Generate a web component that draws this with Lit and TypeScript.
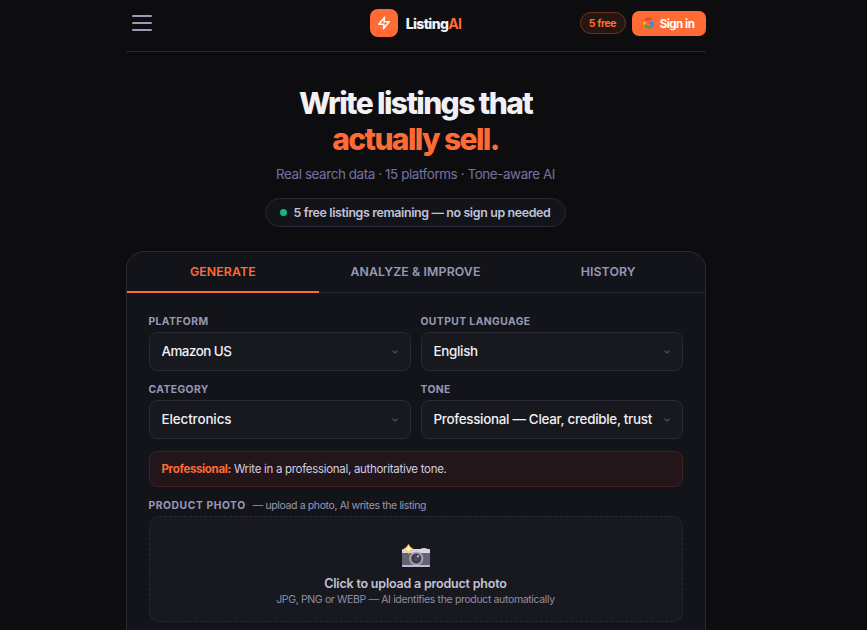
import { LitElement, html, css } from "lit";
import { customElement, property } from "lit/decorators.js";
import { classMap } from "lit/directives/class-map.js";

@customElement("select-field")
class SelectField extends LitElement {
  @property() label = "";
  @property() value = "";
  @property({ type: Number }) tracking = 0;

  static styles = css`
    :host { display: block; min-width: 0; }
    .label {
      height: 22px; line-height: 23px; margin: 0;
      font-size: 10.3px; font-weight: 700; letter-spacing: 0.43px;
      color: #9998b5; text-transform: uppercase;
    }
    .box {
      box-sizing: border-box; height: 39px; display: flex; align-items: center;
      gap: 10px; padding: 0 11px 1px 12px; border: 1px solid #282934; border-radius: 8px;
      background: #18191e; color: #f0f0f5; font-size: 13.4px; font-weight: 500;
    }
    .value { flex: 1; min-width: 0; white-space: nowrap; overflow: hidden; line-height: 20px; }
    svg { flex: none; margin-top: 2px; }
  `;

  render() {
    return html`
      <div class="label">${this.label}</div>
      <div class="box">
        <span class="value" style="letter-spacing:${this.tracking}px">${this.value}</span>
        <svg width="8" height="6" viewBox="0 0 8 6" fill="none" stroke="#4c4b63" stroke-width="1.2" stroke-linecap="round" stroke-linejoin="round"><path d="M1.800 1.800l2.200 2.200 2.200-2.200" /></svg>
      </div>
    `;
  }
}

@customElement("app-root")
class AppRoot extends LitElement {
  static styles = css`
    :host {
      display: block; height: 630px; overflow: hidden; background: #0d0d0f;
      font-family: "Inter", "Liberation Sans", sans-serif; color: #f0f0f5;
    }
    .page { width: 580px; margin-left: 125.5px; }
    header {
      box-sizing: border-box; height: 52px; padding-bottom: 5px;
      display: grid; grid-template-columns: 1fr auto 1fr; align-items: center;
      border-bottom: 1px solid #28282b;
    }
    .burger { display: flex; flex-direction: column; gap: 5px; width: 20px; margin-left: 6px; }
    .burger i { height: 2px; background: #9d9ab8; border-radius: 1px; }
    .brand { display: flex; align-items: center; gap: 8px; }
    .logo {
      width: 28px; height: 28px; border-radius: 8px; background: #ff6b35;
      display: flex; align-items: center; justify-content: center;
    }
    .name { font-size: 14px; font-weight: 800; letter-spacing: -0.65px; line-height: 20px; margin-top: 1px; }
    .name b, .accent { color: #ff6b35; font-weight: 800; }
    .name b { font-weight: 700; }
    .actions { display: flex; align-items: center; justify-content: flex-end; gap: 6px; }
    .badge {
      box-sizing: border-box; width: 46px; height: 22px; border-radius: 11px;
      border: 1px solid #66331f; background: #25160f; color: #ff6b35;
      font-size: 10.5px; font-weight: 700; letter-spacing: -0.42px; line-height: 21px; text-align: center;
    }
    .signin {
      box-sizing: border-box; width: 74px; height: 25px; border-radius: 7px; background: #ff6b35; color: #fff;
      display: flex; align-items: center; justify-content: center; gap: 5px;
      font-size: 11.5px; font-weight: 700; letter-spacing: -0.49px; white-space: nowrap;
    }
    .signin span { margin-top: 1px; }
    .hero { display: flex; flex-direction: column; align-items: center; padding-top: 33px; }
    h1 {
      margin: 0; font-size: 30px; font-weight: 800; letter-spacing: -1.6px;
      line-height: 36px; text-align: center;
    }
    .sub { margin: 6px 0 0; height: 22px; line-height: 22px; font-size: 13.4px; letter-spacing: -0.4px; color: #7573a0; white-space: nowrap; }
    .remaining {
      box-sizing: border-box; width: 301px; height: 29px; margin-top: 13px; margin-right: 1px; border-radius: 15px;
      border: 1px solid #282934; background: #13141a; color: #c4c3d6;
      display: flex; align-items: center; justify-content: center; gap: 7px;
      font-size: 12.4px; font-weight: 600; letter-spacing: -0.355px; white-space: nowrap;
    }
    .dot { width: 7px; height: 7px; border-radius: 50%; background: #10b981; }
    .card {
      box-sizing: border-box; height: 420px; margin-top: 24px; background: #13141a;
      border: 1px solid #282934; border-radius: 18px;
    }
    .tabs { display: grid; grid-template-columns: repeat(3, 1fr); height: 40px; border-bottom: 1px solid #282934; }
    .tab {
      height: 39px; line-height: 40px; text-align: center; font-size: 12.3px;
      font-weight: 600; letter-spacing: 0.12px; color: #9998b5; border-bottom: 2px solid transparent;
    }
    .tab.active { color: #ff6b35; border-bottom-color: #ff6b35; }
    .body { padding: 17px 22px 0; }
    .grid { display: grid; grid-template-columns: 1fr 1fr; gap: 7px 10px; }
    .notice {
      box-sizing: border-box; height: 36px; margin-top: 12px; padding: 0 12px; line-height: 34px;
      border: 1px solid #40221f; border-radius: 8px; background: #22161b;
      font-size: 11.5px; letter-spacing: -0.3px; color: #d0cfe2;
    }
    .notice b { color: #ff6b35; letter-spacing: -0.34px; }
    .photo-label { display: flex; gap: 7px; height: 23px; line-height: 23px; margin-top: 7px; color: #9998b5; }
    .photo-label b { font-size: 10.3px; letter-spacing: 0.58px; }
    .photo-label span { font-size: 10.5px; letter-spacing: -0.375px; }
    .drop {
      box-sizing: border-box; height: 106px; margin-top: -1px; padding-top: 27px;
      border: 1px dashed #2a2b36; border-radius: 10px; background: #18191e;
      display: flex; flex-direction: column; align-items: center; white-space: nowrap;
    }
    .drop strong { margin-top: 7px; font-size: 12.5px; line-height: 18px; font-weight: 600; letter-spacing: -0.2px; color: #c4c3d6; }
    .drop small { font-size: 10.5px; line-height: 14px; letter-spacing: -0.355px; color: #8f8eac; }
  `;

  private tabs = ["GENERATE", "ANALYZE & IMPROVE", "HISTORY"];
  private fields = [
    { label: "Platform", value: "Amazon US", tracking: -0.53 },
    { label: "Output language", value: "English", tracking: -0.3 },
    { label: "Category", value: "Electronics", tracking: -0.1 },
    { label: "Tone", value: "Professional — Clear, credible, trust", tracking: -0.285 },
  ];

  private bolt = html`<svg width="14" height="14" viewBox="0 0 24 24" fill="none" stroke="#fff" stroke-width="2.5" stroke-linecap="round" stroke-linejoin="round"><path d="M13 2L3 14h9l-1 8 10-12h-9l1-8z" /></svg>`;

  private google = html`<svg width="12" height="12" viewBox="0 0 24 24">
    <path fill="#4285F4" d="M22.56 12.25c0-.78-.07-1.53-.2-2.25H12v4.26h5.92c-.26 1.37-1.04 2.53-2.21 3.31v2.77h3.57c2.08-1.92 3.28-4.74 3.28-8.09z" />
    <path fill="#34A853" d="M12 23c2.97 0 5.46-.98 7.28-2.66l-3.57-2.77c-.98.66-2.23 1.06-3.71 1.06-2.86 0-5.29-1.93-6.16-4.53H2.18v2.84C3.99 20.53 7.7 23 12 23z" />
    <path fill="#FBBC05" d="M5.84 14.09c-.22-.66-.35-1.36-.35-2.09s.13-1.43.35-2.09V7.07H2.18C1.43 8.55 1 10.22 1 12s.43 3.45 1.18 4.93l3.66-2.84z" />
    <path fill="#EA4335" d="M12 5.38c1.62 0 3.06.56 4.21 1.64l3.15-3.15C17.45 2.09 14.97 1 12 1 7.7 1 3.99 3.47 2.18 7.07l3.66 2.84c.87-2.6 3.3-4.53 6.16-4.53z" />
  </svg>`;

  private camera = html`<svg width="30" height="24" viewBox="0 0 30 24">
    <path fill="#b9b4c6" d="M20 5.2q0-1.2 1.2-1.2h3.6q1.2 0 1.2 1.2V6h-6z" />
    <rect x="1" y="5" width="28" height="18" rx="1.2" fill="#68646f" />
    <path fill="#d9d3e6" d="M1 6.2Q1 5 2.2 5h25.6Q29 5 29 6.2V9H1z" />
    <path fill="#c5b5dc" d="M1 21h28v.8q0 1.2-1.2 1.2H2.2Q1 23 1 21.8z" />
    <circle cx="15.3" cy="14.5" r="7" fill="#b1acba" />
    <circle cx="15.3" cy="14.5" r="5.5" fill="#625d6b" />
    <circle cx="15.3" cy="14.5" r="4.2" fill="#3d3549" />
    <circle cx="15.3" cy="14.5" r="2.5" fill="#554763" />
    <circle cx="17" cy="12.3" r="1" fill="#d9d3e6" />
    <path fill="#f4c85c" d="M7.5 0q2 3.600 5 5-3 1.400-5 5-2-3.600-5-5 3-1.400 5-5z" />
    <path fill="#fff0bd" d="M7.5 1.800q1.300 2.200 3.200 3.200-1.900 1-3.200 3.200-1.300-2.200-3.200-3.200 1.900-1 3.200-3.200z" />
  </svg>`;

  render() {
    return html`
      <div class="page">
        <header>
          <div class="burger"><i></i><i></i><i></i></div>
          <div class="brand"><span class="logo">${this.bolt}</span><span class="name">Listing<b>AI</b></span></div>
          <div class="actions"><span class="badge">5 free</span><span class="signin">${this.google}<span>Sign in</span></span></div>
        </header>
        <section class="hero">
          <h1>Write listings that<br /><span class="accent">actually sell.</span></h1>
          <p class="sub">Real search data · 15 platforms · Tone-aware AI</p>
          <div class="remaining"><i class="dot"></i><span>5 free listings remaining — no sign up needed</span></div>
        </section>
        <main class="card">
          <nav class="tabs">${this.tabs.map((t, i) => html`<div class=${classMap({ tab: true, active: i === 0 })}>${t}</div>`)}</nav>
          <div class="body">
            <div class="grid">
              ${this.fields.map((f) => html`<select-field .label=${f.label} .value=${f.value} .tracking=${f.tracking}></select-field>`)}
            </div>
            <div class="notice"><b>Professional:</b> Write in a professional, authoritative tone.</div>
            <div class="photo-label"><b>PRODUCT PHOTO</b><span>— upload a photo, AI writes the listing</span></div>
            <div class="drop">
              ${this.camera}
              <strong>Click to upload a product photo</strong>
              <small>JPG, PNG or WEBP — AI identifies the product automatically</small>
            </div>
          </div>
        </main>
      </div>
    `;
  }
}
